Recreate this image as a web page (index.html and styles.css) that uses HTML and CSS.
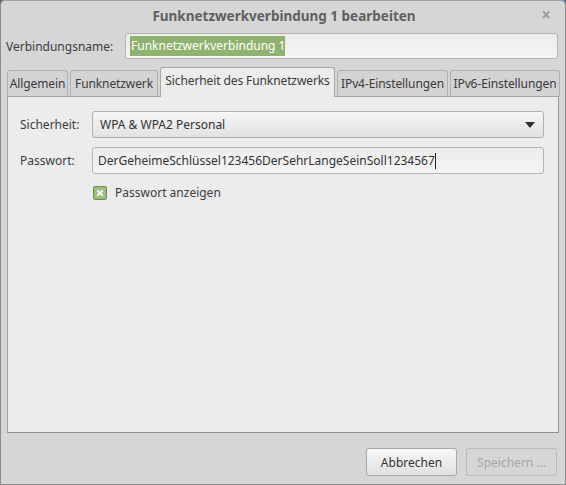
FILE: index.html
```html
<!DOCTYPE html>
<html lang="de">
<head>
<meta charset="utf-8">
<link rel="stylesheet" href="styles.css">
</head>
<body>
<div class="window">
  <div class="titlebar">
    <span class="title">Funknetzwerkverbindung 1 bearbeiten</span>
    <span class="close">×</span>
  </div>
  <div class="name-row">
    <label class="name-label">Verbindungsname:</label>
    <div class="entry name-entry"><span class="sel">Funknetzwerkverbindung 1</span></div>
  </div>
  <div class="tabs">
    <div class="tab t1">Allgemein</div>
    <div class="tab t2">Funknetzwerk</div>
    <div class="tab active t3">Sicherheit des Funknetzwerks</div>
    <div class="tab t4">IPv4-Einstellungen</div>
    <div class="tab t5">IPv6-Einstellungen</div>
  </div>
  <div class="panel">
    <div class="form">
      <span class="lbl">Sicherheit:</span>
      <div class="combo"><span>WPA &amp; WPA2 Personal</span><span class="arrow"></span></div>
      <span class="lbl">Passwort:</span>
      <div class="entry pw-entry"><span>DerGeheimeSchlüssel123456DerSehrLangeSeinSoll1234567</span><span class="caret"></span></div>
      <span></span>
      <div class="check-row"><span class="check"><svg width="8" height="8" viewBox="0 0 8 8"><path d="M1.2 1.2L6.8 6.8M6.8 1.2L1.2 6.8" stroke="#f4f4f4" stroke-width="2"/></svg></span><span>Passwort anzeigen</span></div>
    </div>
  </div>
  <div class="buttons">
    <div class="btn">Abbrechen</div>
    <div class="btn disabled">Speichern …</div>
  </div>
</div>
</body>
</html>
```
FILE: styles.css
```css
html, body {
  margin: 0;
  padding: 0;
  background: #5a6e85;
}
body {
  font-family: "Noto Sans", "DejaVu Sans", sans-serif;
  font-size: 12px;
  color: #3c3c3c;
}
.window {
  width: 564px;
  height: 483px;
  background: #d6d6d6;
  border: 1px solid #8c8c8c;
  border-top-color: #a0a0a0;
  border-radius: 5px 5px 0 0;
  display: flex;
  flex-direction: column;
}
.titlebar {
  height: 30px;
  display: flex;
  align-items: center;
  justify-content: center;
  position: relative;
}
.title {
  font-weight: bold;
  font-size: 13.5px;
  color: #606060;
  padding-left: 2px;
}
.close {
  position: absolute;
  right: 14px;
  top: 2px;
  font-size: 17px;
  font-weight: bold;
  color: #9a9a9a;
}
.name-row {
  display: flex;
  align-items: center;
  padding: 2px 7px 0 5px;
  height: 26px;
}
.name-label {
  width: 119px;
}
.entry {
  flex: 1;
  height: 24px;
  border: 1px solid #b4b4b4;
  border-radius: 3px;
  background: linear-gradient(#ececec, #f4f4f4);
  display: flex;
  align-items: center;
  box-sizing: content-box;
}
.name-entry {
  padding-left: 4px;
}
.sel {
  background: #8fb26f;
  color: #fff;
  padding: 3px 0 3px 1px;
  line-height: 14px;
}
.tabs {
  display: flex;
  align-items: flex-end;
  margin-top: 8px;
  padding-left: 6px;
  height: 29px;
  gap: 2px;
}
.tab {
  flex: none;
  box-sizing: border-box;
  height: 26px;
  border: 1px solid #b0b0b0;
  border-bottom: none;
  border-radius: 3px 3px 0 0;
  background: #d3d3d3;
  display: flex;
  align-items: center;
  justify-content: center;
  padding: 0 0 1px 0;
  white-space: nowrap;
  letter-spacing: -0.1px;
  color: #3a3a3a;
}
.tab.active {
  height: 30px;
  background: #ececec;
  border-color: #a8a8a8;
  margin-bottom: -1px;
  padding-bottom: 4px;
  position: relative;
  z-index: 1;
}
.t1 { width: 61px; }
.t2 { width: 88px; }
.t3 { width: 175px; }
.t4 { width: 111px; }
.t5 { width: 110px; }
.panel {
  margin: 0 6px 0 6px;
  height: 335px;
  background: #ececec;
  border: 1px solid #a4a4a4;
  border-right-color: #9a9a9a;
  border-bottom-color: #8e8e8e;
}
.form {
  display: grid;
  grid-template-columns: 72px 452px;
  grid-auto-rows: auto;
  column-gap: 0;
  row-gap: 9px;
  padding: 14px 0 0 12px;
  align-items: center;
}
.combo {
  height: 25px;
  border: 1px solid #b0b0b0;
  border-radius: 3px;
  background: linear-gradient(#f6f6f6, #e2e2e2);
  display: flex;
  align-items: center;
  justify-content: space-between;
  padding: 0 8px 0 7px;
  color: #333;
}
.arrow {
  width: 0;
  height: 0;
  border-left: 5px solid transparent;
  border-right: 5px solid transparent;
  border-top: 6px solid #2e2e2e;
}
.pw-entry {
  height: 25px;
  padding-left: 5px;
  background: linear-gradient(#ececec, #f5f5f5);
  color: #333;
}
.caret {
  width: 1px;
  height: 16px;
  background: #222;
}
.check-row {
  display: flex;
  align-items: center;
  gap: 8px;
  margin-left: 1px;
  margin-top: 1px;
}
.check {
  width: 12px;
  height: 12px;
  border: 1px solid #6d8e50;
  border-radius: 2px;
  background: #9dbd7d;
  display: flex;
  align-items: center;
  justify-content: center;
}
.check svg { display: block; }
.buttons {
  display: flex;
  justify-content: flex-end;
  gap: 9px;
  padding: 15px 8px 0 0;
}
.btn {
  width: 89px;
  height: 26px;
  border: 1px solid #a8a8a8;
  border-radius: 3px;
  background: linear-gradient(#f8f8f8, #e0e0e0);
  display: flex;
  align-items: center;
  justify-content: center;
  color: #333;
}
.btn.disabled {
  background: #d6d6d6;
  border-color: #bcbcbc;
  color: #a6a6a6;
}
```
